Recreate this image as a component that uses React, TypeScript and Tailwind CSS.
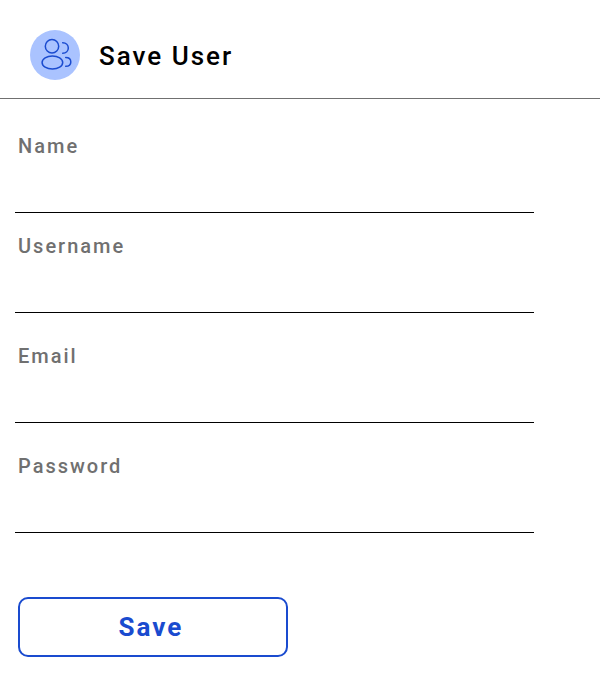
import React from "react";

type Field = { id: string; label: string; type: string; spacing: string };

const fields: Field[] = [
  { id: "name", label: "Name", type: "text", spacing: "" },
  { id: "username", label: "Username", type: "text", spacing: "mt-[21px]" },
  { id: "email", label: "Email", type: "email", spacing: "mt-[31px]" },
  { id: "password", label: "Password", type: "password", spacing: "mt-[31px]" },
];

function UsersIcon() {
  return (
    <svg
      viewBox="0 0 50 50"
      className="size-[50px] shrink-0"
      fill="none"
      stroke="#1a4bcf"
      strokeWidth="1.5"
      strokeLinecap="round"
      aria-hidden="true"
    >
      <circle cx="25" cy="25" r="25" fill="#aac3ff" stroke="none" />
      <circle cx="22" cy="16.3" r="6.7" />
      <ellipse cx="22.4" cy="32.5" rx="10.3" ry="6.6" />
      <path d="M32.7 12.7C36 12.7 38.3 15 38.3 18S36 23.2 32.7 23.2" />
      <path d="M35.7 27.5C38.8 27.5 40.8 29.3 40.8 31.9S38.8 36.3 35.7 36.3" />
    </svg>
  );
}

export default function App() {
  return (
    <main className="bg-white font-['Roboto',sans-serif] tracking-[2px]">
      <header className="flex items-center gap-[19px] border-b border-[#707070] px-[30px] pt-[30px] pb-[18px]">
        <UsersIcon />
        <h1 className="pt-0.5 text-[26px] leading-8 font-medium text-black">Save User</h1>
      </header>
      <form className="pt-[35px] pr-[66px] pb-[29px] pl-[15px]" onSubmit={(e) => e.preventDefault()}>
        {fields.map((f) => (
          <div key={f.id} className={f.spacing}>
            <label htmlFor={f.id} className="block pl-[3px] text-[20px] leading-6 font-medium text-[#707070]">
              {f.label}
            </label>
            <input
              id={f.id}
              type={f.type}
              className="block h-[55px] w-full border-b border-black bg-transparent px-[3px] text-[20px] text-black outline-none"
            />
          </div>
        ))}
        <button
          type="submit"
          className="mt-16 ml-[3px] block h-[60px] w-[270px] rounded-[10px] border-2 border-[#1a4bcf] bg-white pr-1 text-[26px] leading-8 font-bold text-[#1a4bcf]"
        >
          Save
        </button>
      </form>
    </main>
  );
}
